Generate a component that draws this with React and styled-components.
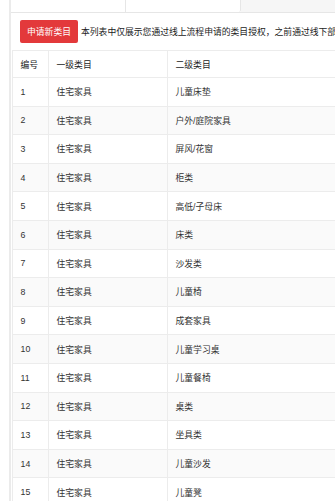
import React from "react";
import styled, { createGlobalStyle } from "styled-components";

const Global = createGlobalStyle`
  html, body { margin: 0; padding: 0; background: #fff; overflow: hidden; }
  body { font-family: "Liberation Sans", "Noto Sans CJK SC", sans-serif; color: #333; }
`;

const Page = styled.div`
  display: flex;
  width: 335px;
  height: 501px;
  overflow: hidden;
`;

const Sidebar = styled.div`
  flex: 0 0 9px;
  background: #fff;
  border-right: 2px solid #ebebeb;
`;

const Main = styled.div`
  flex: 1;
  min-width: 0;
  overflow: hidden;
`;

const TabBar = styled.div`
  display: flex;
  height: 12px;
  border-bottom: 1px solid #e6e6e6;
`;

const Tab = styled.div`
  flex: 0 0 ${(p) => p.$w}px;
  box-sizing: border-box;
  background: #fff;
  border-right: 1px solid #e6e6e6;
  border-bottom-right-radius: ${(p) => (p.$round ? "2px" : "0")};
`;

const TabFill = styled.div`
  flex: 1;
  background: #f6f6f6;
`;

const Toolbar = styled.div`
  display: flex;
  align-items: center;
  gap: 3px;
  padding: 7px 0 0 9px;
  height: 23px;
  white-space: nowrap;
`;

const ApplyButton = styled.button`
  flex: 0 0 auto;
  width: 58px;
  height: 23px;
  padding: 0;
  border: none;
  border-radius: 2px;
  background: #e3393b;
  color: #fff;
  font-family: "Noto Sans CJK SC", sans-serif;
  font-size: 8.8px;
  line-height: 23px;
  text-align: center;
`;

const Notice = styled.span`
  font-family: "Noto Sans CJK SC", sans-serif;
  font-size: 8.8px;
  color: #222;
`;

const Table = styled.table`
  margin-top: 7px;
  margin-left: 1px;
  width: 560px;
  table-layout: fixed;
  border-collapse: collapse;
  font-size: 8.8px;
`;

const HeadRow = styled.tr`
  height: 27px;
`;

const Row = styled.tr`
  height: 28.6px;
  background: ${(p) => (p.$alt ? "#fafafa" : "#fff")};
`;

const Cell = styled.td`
  border: 1px solid #ececec;
  padding: 0 0 0 7.5px;
  white-space: nowrap;
  overflow: hidden;
  color: ${(p) => (p.$head ? "#222" : "#333")};
  font-family: "Liberation Sans", "Noto Sans CJK SC", sans-serif;
  font-weight: normal;
  text-align: left;
`;

const rows = [
  "儿童床垫",
  "户外/庭院家具",
  "屏风/花窗",
  "柜类",
  "高低/子母床",
  "床类",
  "沙发类",
  "儿童椅",
  "成套家具",
  "儿童学习桌",
  "儿童餐椅",
  "桌类",
  "坐具类",
  "儿童沙发",
  "儿童凳",
];

export default function App() {
  return (
    <>
      <Global />
      <Page>
        <Sidebar />
        <Main>
          <TabBar>
            <Tab $w={115} />
            <Tab $w={115} $round />
            <TabFill />
          </TabBar>
          <Toolbar>
            <ApplyButton>申请新类目</ApplyButton>
            <Notice>
              本列表中仅展示您通过线上流程申请的类目授权，之前通过线下部署的类目授权请联系对接人员查询
            </Notice>
          </Toolbar>
          <Table>
            <colgroup>
              <col style={{ width: 36 }} />
              <col style={{ width: 119 }} />
              <col />
            </colgroup>
            <thead>
              <HeadRow>
                <Cell as="th" $head>编号</Cell>
                <Cell as="th" $head>一级类目</Cell>
                <Cell as="th" $head>二级类目</Cell>
              </HeadRow>
            </thead>
            <tbody>
              {rows.map((name, i) => (
                <Row key={i} $alt={i % 2 === 1}>
                  <Cell>{i + 1}</Cell>
                  <Cell>住宅家具</Cell>
                  <Cell>{name}</Cell>
                </Row>
              ))}
            </tbody>
          </Table>
        </Main>
      </Page>
    </>
  );
}
